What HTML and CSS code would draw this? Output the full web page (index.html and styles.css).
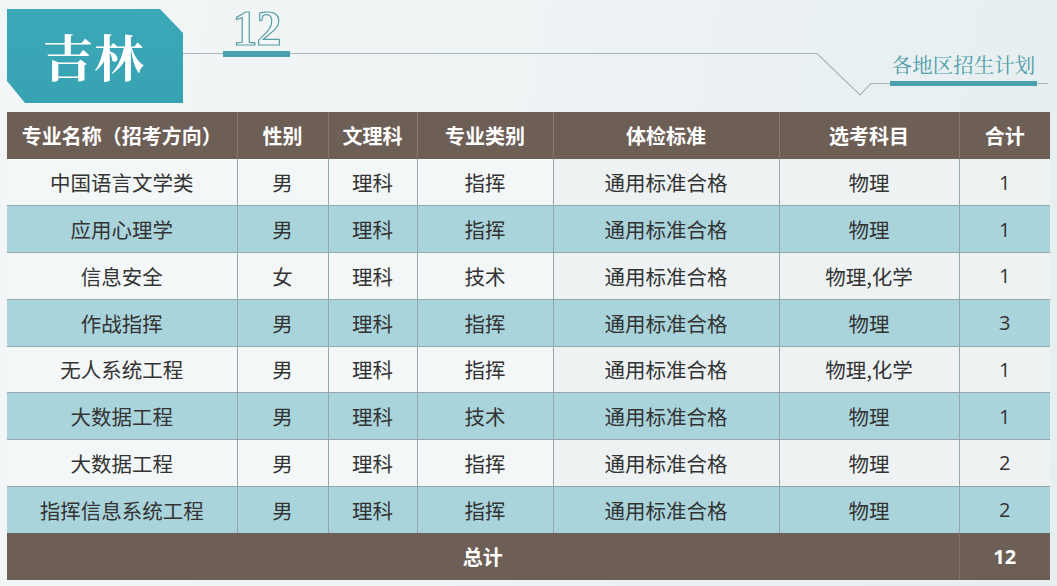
FILE: index.html
```html
<!DOCTYPE html>
<html lang="zh-CN">
<head>
<meta charset="utf-8">
<link rel="stylesheet" href="styles.css">
</head>
<body>
<div class="page">
  <header class="top">
    <svg class="deco" width="1057" height="112" viewBox="0 0 1057 112">
      <polyline points="183,53.5 817,53.5 860,95 871,83.5 1048,83.5" fill="none" stroke="#a7b6b9" stroke-width="1.2"/>
    </svg>
    <div class="badge"><span class="badge-text">吉林</span></div>
    <div class="num">
      <span class="num-text">12</span>
      <span class="num-bar"></span>
    </div>
    <div class="title">
      <span class="title-text">各地区招生计划</span>
      <span class="title-bar"></span>
    </div>
  </header>
  <table class="plan">
    <colgroup>
      <col class="c1"><col class="c2"><col class="c3"><col class="c4"><col class="c5"><col class="c6"><col class="c7">
    </colgroup>
    <thead>
      <tr><th>专业名称（招考方向）</th><th>性别</th><th>文理科</th><th>专业类别</th><th>体检标准</th><th>选考科目</th><th>合计</th></tr>
    </thead>
    <tbody>
      <tr class="w"><td>中国语言文学类</td><td>男</td><td>理科</td><td>指挥</td><td>通用标准合格</td><td>物理</td><td class="n">1</td></tr>
      <tr class="b"><td>应用心理学</td><td>男</td><td>理科</td><td>指挥</td><td>通用标准合格</td><td>物理</td><td class="n">1</td></tr>
      <tr class="w"><td>信息安全</td><td>女</td><td>理科</td><td>技术</td><td>通用标准合格</td><td>物理,化学</td><td class="n">1</td></tr>
      <tr class="b"><td>作战指挥</td><td>男</td><td>理科</td><td>指挥</td><td>通用标准合格</td><td>物理</td><td class="n">3</td></tr>
      <tr class="w"><td>无人系统工程</td><td>男</td><td>理科</td><td>指挥</td><td>通用标准合格</td><td>物理,化学</td><td class="n">1</td></tr>
      <tr class="b"><td>大数据工程</td><td>男</td><td>理科</td><td>技术</td><td>通用标准合格</td><td>物理</td><td class="n">1</td></tr>
      <tr class="w"><td>大数据工程</td><td>男</td><td>理科</td><td>指挥</td><td>通用标准合格</td><td>物理</td><td class="n">2</td></tr>
      <tr class="b"><td>指挥信息系统工程</td><td>男</td><td>理科</td><td>指挥</td><td>通用标准合格</td><td>物理</td><td class="n">2</td></tr>
    </tbody>
    <tfoot>
      <tr><td colspan="6">总计</td><td class="n">12</td></tr>
    </tfoot>
  </table>
</div>
</body>
</html>
```

FILE: styles.css
```css
* { box-sizing: border-box; }
html, body { margin: 0; padding: 0; }
body {
  width: 1057px;
  height: 586px;
  overflow: hidden;
  background: linear-gradient(100deg, #f3f6f6 0%, #eef3f4 45%, #e6eef0 100%);
  font-family: "Noto Sans CJK SC", "Noto Sans", sans-serif;
  color: #333;
}
.page { width: 1057px; height: 586px; }

.top {
  position: relative;
  height: 112px;
  display: flex;
  align-items: flex-start;
}
.deco { position: absolute; left: 0; top: 0; }

.badge {
  position: relative;
  margin: 9px 0 0 7px;
  width: 176px;
  height: 94px;
  background: linear-gradient(180deg, #3ba8b8 0%, #37a2b2 100%);
  clip-path: polygon(0 0, 153px 0, 176px 24px, 176px 94px, 18px 94px, 0 72px);
  display: flex;
  align-items: center;
  padding-left: 36px;
}
.badge-text {
  font-family: "Noto Serif CJK SC", "Noto Sans CJK SC", serif;
  font-weight: 700;
  font-size: 50px;
  line-height: 1;
  color: #fff;
  letter-spacing: 1px;
  margin-top: -2px;
}

.num {
  position: relative;
  margin-left: 40px;
  width: 67px;
  display: flex;
  flex-direction: column;
  align-items: center;
}
.num-text {
  font-family: "Liberation Serif", "DejaVu Serif", serif;
  font-weight: 700;
  font-size: 50px;
  line-height: 56px;
  height: 46px;
  letter-spacing: -1px;
  color: #f4f8f8;
  -webkit-text-stroke: 1.2px #5a9ea6;
}
.num-bar {
  width: 67px;
  height: 6px;
  background: #4aa1ad;
  margin-top: 5px;
}

.title {
  position: relative;
  margin-left: auto;
  margin-right: 20px;
  margin-top: 50px;
  width: 147px;
  display: flex;
  flex-direction: column;
  align-items: center;
}
.title-text {
  font-family: "Noto Serif CJK SC", "Noto Sans CJK SC", serif;
  font-size: 20.5px;
  line-height: 28px;
  color: #4f9ea8;
  white-space: nowrap;
}
.title-bar {
  width: 147px;
  height: 5px;
  background: #4aa1ad;
  margin-top: 3px;
}

.plan {
  margin-left: 7px;
  width: 1043px;
  border-collapse: collapse;
  table-layout: fixed;
}
.c1 { width: 230px; }
.c2 { width: 91px; }
.c3 { width: 89px; }
.c4 { width: 136px; }
.c5 { width: 226px; }
.c6 { width: 180px; }
.c7 { width: 91px; }

.plan th, .plan td {
  padding: 0;
  text-align: center;
  vertical-align: middle;
  white-space: nowrap;
}
.plan thead th {
  height: 47px;
  background: #6d5e56;
  color: #fff;
  font-weight: 700;
  font-size: 20px;
  border-left: 1px solid #877870;
}
.plan thead th:first-child { border-left: none; }

.plan tbody td {
  height: 46.75px;
  font-size: 20.5px;
  color: #333;
  border: 1px solid #95a7ac;
}
.plan tbody td:first-child { border-left: none; }
.plan tbody td:last-child { border-right: none; }
.plan tbody tr:first-child td { border-top: none; }
.plan tbody tr:last-child td { border-bottom: none; }
.plan tbody tr.w td { background: #f4f7f7; }
.plan tbody tr.w td:nth-child(n+5) { background: #eef2f3; }
.plan tbody tr.b td { background: #aad4dc; }
.plan td.n { font-family: "Open Sans", "Noto Sans", sans-serif; font-size: 20px; }

.plan tfoot td {
  height: 47px;
  background: #6d5e56;
  color: #fff;
  font-weight: 700;
  font-size: 20px;
  border-left: 1px solid #80716a;
}
.plan tfoot td:first-child { border-left: none; }
.plan tfoot td.n { font-weight: 700; }
```
